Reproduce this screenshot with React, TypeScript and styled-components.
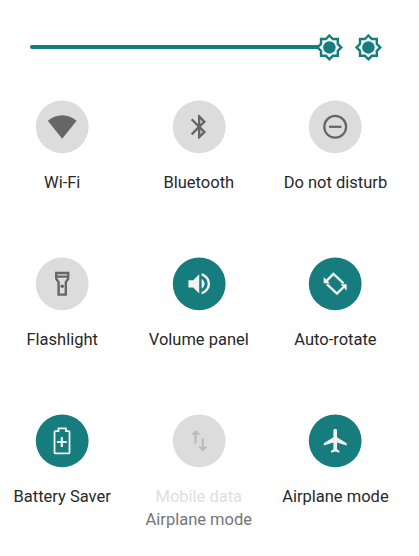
import React from 'react';
import styled, { createGlobalStyle } from 'styled-components';

const TEAL = '#177c7e';

const GlobalStyle = createGlobalStyle`
  * { box-sizing: border-box; }
  body { margin: 0; background: #fff; font-family: Roboto, "Liberation Sans", sans-serif; }
`;

const Panel = styled.main`
  width: 419px;
  height: 556px;
  background: #fff;
  overflow: hidden;
`;

const BrightnessRow = styled.div`
  display: flex;
  align-items: center;
  height: 100px;
  padding: 0 36.4px 5.6px 30px;
`;

const Track = styled.div`
  flex: 1;
  height: 3.6px;
  border-radius: 2px 0 0 2px;
  background: ${TEAL};
`;

const Sun = styled.svg<{ $gap?: number }>`
  flex: none;
  width: 28.8px;
  height: 28.8px;
  margin-left: ${(p) => p.$gap ?? 0}px;
`;

const TileGrid = styled.div`
  display: grid;
  grid-template-columns: repeat(3, 136.6px);
  grid-auto-rows: 157px;
  margin-left: -6.1px;
`;

const Tile = styled.div`
  display: flex;
  flex-direction: column;
  align-items: center;
`;

const TileIcon = styled.svg<{ $active?: boolean; $disabled?: boolean }>`
  width: 54px;
  height: 54px;
  margin-bottom: 17px;
  color: ${(p) => (p.$active ? '#f3f3f3' : p.$disabled ? '#bcbcbc' : '#666')};
`;

const Disc = styled.circle<{ $active?: boolean }>`
  fill: ${(p) => (p.$active ? TEAL : '#dcdcdc')};
`;

const Label = styled.span<{ $tone?: string }>`
  font-size: 16.5px;
  line-height: 23px;
  white-space: nowrap;
  color: ${(p) => p.$tone ?? '#282828'};
`;

const SunIcon = ({ gap }: { gap?: number }) => (
  <Sun viewBox="0 0 24 24" $gap={gap}>
    <path
      d="M12 2.1 14.9 5H19v4.1L21.9 12 19 14.9V19h-4.1L12 21.9 9.1 19H5v-4.1L2.1 12 5 9.1V5h4.1z"
      fill="#f5f7f7"
      stroke={TEAL}
      strokeWidth="2"
    />
    <circle cx="12" cy="12" r="5.2" fill={TEAL} />
  </Sun>
);

type TileData = {
  label: string;
  detail?: string;
  active?: boolean;
  disabled?: boolean;
  icon: React.ReactNode;
};

const tiles: TileData[] = [
  { label: 'Wi-Fi', icon: <path d="M12 21.9 24 7C20.5 4.2 16.5 2.4 12 2.4S3.5 4.2 0 7z" /> },
  {
    label: 'Bluetooth',
    icon: (
      <path d="M17.71 7.71 12 2h-1v7.59L6.41 5 5 6.41 10.59 12 5 17.59 6.41 19 11 14.41V22h1l5.71-5.71L13.41 12l4.3-4.29zM13 5.83l1.88 1.88L13 9.59V5.83zm1.88 10.46L13 18.17v-3.76l1.88 1.88z" />
    ),
  },
  {
    label: 'Do not disturb',
    icon: (
      <g fill="none" stroke="currentColor" strokeWidth="1.9">
        <circle cx="12" cy="12" r="9.1" />
        <path d="M6.8 12h10.4" />
      </g>
    ),
  },
  {
    label: 'Flashlight',
    icon: (
      <>
        <path
          fillRule="evenodd"
          d="M18 2H6v6l2 3v11h8V11l2-3V2zm-2 2v1H8V4h8zm-2 6.4V20h-4v-9.6L8 7.4V7h8v.4l-2 3z"
        />
        <circle cx="12" cy="14" r="1.5" />
      </>
    ),
  },
  {
    label: 'Volume panel',
    active: true,
    icon: (
      <path d="M3 9v6h4l5 5V4L7 9H3zm13.500 3c0-1.770-1.020-3.290-2.500-4.030v8.050c1.480-.73 2.500-2.250 2.500-4.020zM14 3.230v2.060c2.890.86 5 3.540 5 6.710s-2.110 5.850-5 6.710v2.060c4.010-.91 7-4.490 7-8.770s-2.990-7.860-7-8.770z" />
    ),
  },
  {
    label: 'Auto-rotate',
    active: true,
    icon: (
      <>
        <path
          d="M4.800 9.600 10.500 3.800 19 11.700M5 12.300 13.500 20.200 19.200 14.400"
          fill="none"
          stroke="currentColor"
          strokeWidth="1.900"
        />
        <path d="M2.400 6.400v5.200h5.200zM21.600 17.600v-5.200h-5.200z" />
      </>
    ),
  },
  {
    label: 'Battery Saver',
    active: true,
    icon: (
      <g fill="none" stroke="currentColor">
        <path
          d="M8.9 3.9V1.7h6.2v2.200h2.200q.8 0 .8.800v17q0 .8-.8.800H6.400q-.8 0-.8-.8v-17q0-.8.8-.8z"
          strokeWidth="1.5"
        />
        <path d="M7.600 13h8.200M11.700 8.900v8.200" strokeWidth="1.800" />
      </g>
    ),
  },
  {
    label: 'Mobile data',
    detail: 'Airplane mode',
    disabled: true,
    icon: <path d="M9 3 5 6.99h3V14h2V6.99h3L9 3zm7 14.01V10h-2v7.01h-3L15 21l4-3.99h-3z" />,
  },
  {
    label: 'Airplane mode',
    active: true,
    icon: (
      <path
        d="M21 16v-2l-8-5V3.500c0-.83-.67-1.500-1.500-1.500S10 2.670 10 3.500V9l-8 5v2l8-2.500V19l-2 1.500V22l3.500-1 3.500 1v-1.500L13 19v-5.500l8 2.500z"
        transform="translate(.5 0)"
      />
    ),
  },
];

export default function App() {
  return (
    <Panel>
      <GlobalStyle />
      <BrightnessRow>
        <Track />
        <SunIcon gap={-2.6} />
        <SunIcon gap={9.8} />
      </BrightnessRow>
      <TileGrid>
        {tiles.map((tile) => (
          <Tile key={tile.label}>
            <TileIcon viewBox="0 0 54 54" $active={tile.active} $disabled={tile.disabled}>
              <Disc cx="27.2" cy="26.8" r="26.4" $active={tile.active} />
              <g transform="translate(12.8 12.4) scale(1.2)" fill="currentColor">
                {tile.icon}
              </g>
            </TileIcon>
            <Label $tone={tile.disabled ? '#dedfdf' : undefined}>{tile.label}</Label>
            {tile.detail && <Label $tone="#757575">{tile.detail}</Label>}
          </Tile>
        ))}
      </TileGrid>
    </Panel>
  );
}
